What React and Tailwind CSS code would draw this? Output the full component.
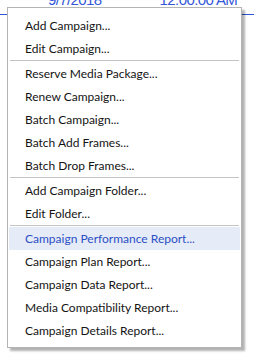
import React from 'react';

const groups = [
  ['Add Campaign...', 'Edit Campaign...'],
  [
    'Reserve Media Package...',
    'Renew Campaign...',
    'Batch Campaign...',
    'Batch Add Frames...',
    'Batch Drop Frames...',
  ],
  ['Add Campaign Folder...', 'Edit Folder...'],
  [
    'Campaign Performance Report...',
    'Campaign Plan Report...',
    'Campaign Data Report...',
    'Media Compatibility Report...',
    'Campaign Details Report...',
  ],
];

const active = 'Campaign Performance Report...';

const MenuItem = ({ label }) => {
  const isActive = label === active;
  return (
    <div
      className={`mx-[1px] h-[23px] pl-[16px] flex items-center text-[12px] leading-none ${
        isActive ? 'bg-[#e6ebf8] text-[#2b4fc4]' : 'text-[#141414]'
      }`}
    >
      {label}
    </div>
  );
};

export default function App() {
  return (
    <div
      className="relative w-[254px] h-[358px] bg-white overflow-hidden"
      style={{ fontFamily: 'Lato, "Liberation Sans", sans-serif' }}
    >
      {/* grid row peeking out behind the menu */}
      <div
        className="h-[15px] border-b border-[#2f56d6] flex items-start text-[15px] leading-none text-[#3558d8] tracking-[-0.6px] overflow-hidden"
        style={{ fontFamily: '"Liberation Sans", sans-serif' }}
      >
        <span className="ml-[48px] mt-[-8px]">9/7/2018</span>
        <span className="ml-[58px] mt-[-8px]">12:00:00 AM</span>
      </div>

      {/* context menu */}
      <div className="absolute left-[7px] top-[7px] w-[235px] bg-white border border-[#b4b4b4] pt-[6px] pb-[5px] shadow-[3px_3px_2px_rgba(0,0,0,0.3)]">
        {groups.map((group, gi) => (
          <div key={gi}>
            {gi > 0 && <div className="mx-[2px] mb-[1px] h-0 border-t border-[#c4c4c4]" />}
            {group.map((label) => (
              <MenuItem key={label} label={label} />
            ))}
          </div>
        ))}
      </div>
    </div>
  );
}
